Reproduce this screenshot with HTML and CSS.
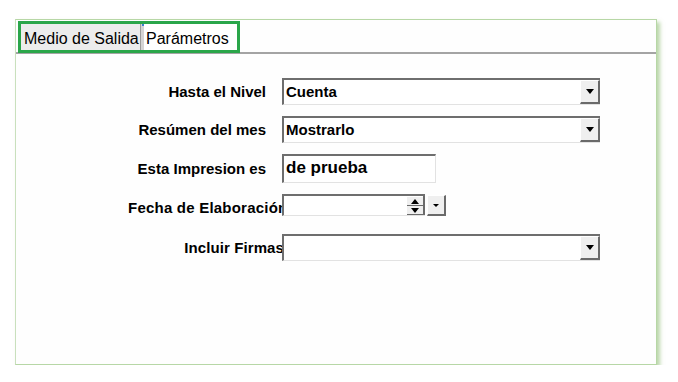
FILE: index.html
```html
<!DOCTYPE html>
<html lang="es">
<head>
  <meta charset="UTF-8" />
  <meta name="viewport" content="width=device-width, initial-scale=1.0"/>
  <title>Parámetros de impresión</title>
  <link rel="stylesheet" href="styles.css">
</head>
<body>
  <div class="panel">
    <div class="tab-strip">
      <div class="tab-list">
        <div class="tab">Medio de Salida</div>
        <div class="tab tab-active">Parámetros</div>
      </div>
    </div>

    <div class="form">
      <label class="field-label">Hasta el Nivel</label>
      <div class="combo combo-wide">
        <span class="combo-value">Cuenta</span>
        <span class="drop-btn"><i class="arrow-down"></i></span>
      </div>

      <label class="field-label">Resúmen del mes</label>
      <div class="combo combo-wide">
        <span class="combo-value">Mostrarlo</span>
        <span class="drop-btn"><i class="arrow-down"></i></span>
      </div>

      <label class="field-label">Esta Impresion es</label>
      <div class="text-input">de prueba</div>

      <label class="field-label label-tight label-low">Fecha de Elaboración</label>
      <div class="date-field">
        <div class="date-input">
          <span class="combo-value"></span>
          <span class="spin">
            <span class="spin-half"><i class="arrow-up"></i></span>
            <span class="spin-half"><i class="arrow-down"></i></span>
          </span>
        </div>
        <span class="drop-btn drop-small"><i class="arrow-down arrow-small"></i></span>
      </div>

      <label class="field-label label-tight label-wide row-last">Incluir Firmas</label>
      <div class="combo combo-wide row-last">
        <span class="combo-value"></span>
        <span class="drop-btn"><i class="arrow-down"></i></span>
      </div>
    </div>
  </div>
</body>
</html>
```

FILE: styles.css
```css
:root {
  --sunken-dark: #6e6e6e;
  --sunken-light: #e2e2e2;
  --button-face: #efefef;
  --button-shadow: #6a6a6a;
  --panel-border: #b7d7a6;
  --highlight: #2aa64a;
}

* {
  box-sizing: border-box;
  margin: 0;
  padding: 0;
}

body {
  font-family: 'Liberation Sans', Arial, sans-serif;
  color: #000;
  background: #fff;
  padding: 19px 0 0 15px;
}

.panel {
  width: 642px;
  height: 346px;
  background: #fefefe;
  border: 1px solid var(--panel-border);
  border-left: 1px solid #c9e0bd;
  box-shadow: 3px 3px 4px rgba(130, 180, 100, 0.55);
}

/* tabs */
.tab-strip {
  margin-top: 1px;
  padding-left: 2px;
  border-bottom: 2px solid #a4a4a4;
  display: flex;
}

.tab-list {
  display: flex;
  height: 32px;
  margin-bottom: -1px;
  border: 3px solid var(--highlight);
  background: #fff;
  position: relative;
  z-index: 2;
}

.tab {
  font-size: 16px;
  line-height: 25px;
  padding: 2px 3px 0 3px;
  background: #ececec;
  border-right: 1px solid #9c9c9c;
  width: 120px;
  white-space: nowrap;
}

.tab-active {
  position: relative;
  background: #fff;
  border-right: none;
  border-left: 3px solid #d4d4d4;
  width: 96px;
  padding-left: 2px;
}

.tab-active::before {
  content: '';
  position: absolute;
  top: 0;
  left: -2px;
  width: 2px;
  height: 2px;
  background: #3a7fd0;
}

/* form */
.form {
  display: grid;
  grid-template-columns: 154px auto;
  row-gap: 11px;
  align-items: center;
  margin: 24px 0 0 112px;
}

.field-label {
  font-weight: bold;
  font-size: 15px;
  line-height: 17px;
  text-align: right;
  padding-right: 16px;
  white-space: nowrap;
}

.label-tight {
  padding-right: 0;
}

.label-low {
  align-self: end;
  letter-spacing: 0.22px;
}

.label-wide {
  letter-spacing: 0.1px;
  margin-right: -2px;
}

.row-last {
  margin-top: 7px;
}

.combo,
.text-input,
.date-input {
  position: relative;
  z-index: 1;
  display: flex;
  background: #fff;
  border-top: 2px solid var(--sunken-dark);
  border-left: 2px solid var(--sunken-dark);
  border-bottom: 1px solid var(--sunken-light);
  border-right: 1px solid var(--sunken-light);
}

.combo-wide {
  width: 318px;
  height: 27px;
  border-right: none;
}

.combo-value {
  flex: 1;
  font-weight: bold;
  font-size: 15px;
  line-height: 23px;
  padding-left: 2px;
}

.drop-btn {
  width: 20px;
  height: 100%;
  display: flex;
  align-items: center;
  justify-content: center;
  background: var(--button-face);
  border-top: 1px solid #fff;
  border-left: 1px solid #fff;
  border-right: 2px solid var(--button-shadow);
  border-bottom: 2px solid var(--button-shadow);
}

.arrow-down,
.arrow-up {
  display: block;
  width: 0;
  height: 0;
  border-left: 4px solid transparent;
  border-right: 4px solid transparent;
}

.arrow-down {
  border-top: 5px solid #000;
}

.arrow-up {
  border-bottom: 5px solid #000;
}

.arrow-small {
  border-left-width: 3px;
  border-right-width: 3px;
  border-top-width: 3px;
}

.text-input {
  width: 154px;
  height: 29px;
  font-weight: bold;
  font-size: 17px;
  line-height: 24px;
  padding-left: 2px;
}

.date-field {
  display: flex;
  align-items: flex-start;
  gap: 2px;
}

.date-input {
  width: 143px;
  height: 22px;
  border-right: none;
}

.spin {
  width: 18px;
  display: flex;
  flex-direction: column;
  border-right: 2px solid var(--button-shadow);
  border-bottom: 1px solid var(--button-shadow);
}

.spin-half {
  flex: 1;
  display: flex;
  align-items: center;
  justify-content: center;
  background: var(--button-face);
  border-top: 1px solid #fff;
}

.spin-half + .spin-half {
  border-top: 1px solid var(--button-shadow);
}

.drop-small {
  width: 19px;
  height: 21px;
  margin-top: 1px;
}
```
